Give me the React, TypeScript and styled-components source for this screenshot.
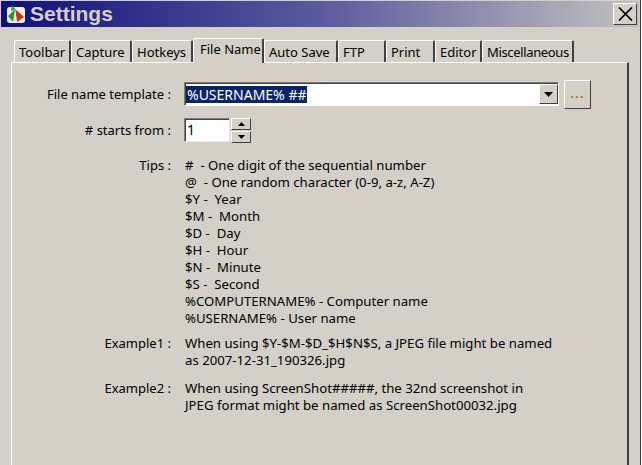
import React from 'react';
import styled, {createGlobalStyle} from 'styled-components';

const GlobalStyle = createGlobalStyle`
  html, body {
    margin: 0;
    padding: 0;
    background: #d4d0c8;
  }
`

const tabs = [
    {label: 'Toolbar', width: 57},
    {label: 'Capture', width: 61},
    {label: 'Hotkeys', width: 61},
    {label: 'File Name', width: 71, active: true},
    {label: 'Auto Save', width: 74},
    {label: 'FTP', width: 48},
    {label: 'Print', width: 49},
    {label: 'Editor', width: 47},
    {label: 'Miscellaneous', width: 92, tight: true},
];

const tips = [
    '#  - One digit of the sequential number',
    '@  - One random character (0-9, a-z, A-Z)',
    '$Y -  Year',
    '$M -  Month',
    '$D -  Day',
    '$H -  Hour',
    '$N -  Minute',
    '$S -  Second',
    '%COMPUTERNAME% - Computer name',
    '%USERNAME% - User name',
];

const App: React.FC = () => {
    return (
        <Window>
            <GlobalStyle/>
            <TitleBar>
                <svg width="20" height="20" viewBox="0 0 20 20">
                    <rect x="1" y="3" width="18" height="16" rx="3" fill="#f6f2f0"/>
                    <path d="M9 5 L18 13 L11 18 Z" fill="#e0281c"/>
                    <path d="M9 5 L11 18 L7 18 Z" fill="#f4e8c8"/>
                    <path d="M9 5 L7 18 L2 12 Z" fill="#1f9a2e"/>
                    <path d="M9 5 L6 1 L5 7 Z" fill="#1f9a2e"/>
                </svg>
                <Title>Settings</Title>
                <CloseButton>
                    <svg width="15" height="14" viewBox="0 0 15 14">
                        <path d="M1 0.5 L14 13.5 M14 0.5 L1 13.5" stroke="#000" strokeWidth="1.7"/>
                    </svg>
                </CloseButton>
            </TitleBar>
            <TabRow>
                {tabs.map(tab => (
                    <Tab key={tab.label} $width={tab.width} $active={tab.active} $tight={tab.tight}>{tab.label}</Tab>
                ))}
            </TabRow>
            <Panel>
                <FormGrid>
                    <Label>File name template :</Label>
                    <TemplateRow>
                        <Combo>
                            <Selected>%USERNAME% ##</Selected>
                            <ComboArrow>
                                <svg width="9" height="5" viewBox="0 0 9 5">
                                    <path d="M0 0 H9 L4.5 5 Z" fill="#000"/>
                                </svg>
                            </ComboArrow>
                        </Combo>
                        <BrowseButton>...</BrowseButton>
                    </TemplateRow>

                    <Label $top={9}>{'# starts from :'}</Label>
                    <SpinRow>
                        <SpinInput>1</SpinInput>
                        <SpinButtons>
                            <SpinButton>
                                <svg width="7" height="4" viewBox="0 0 7 4"><path d="M3.5 0 L7 4 H0 Z" fill="#000"/></svg>
                            </SpinButton>
                            <SpinButton>
                                <svg width="7" height="4" viewBox="0 0 7 4"><path d="M0 0 H7 L3.5 4 Z" fill="#000"/></svg>
                            </SpinButton>
                        </SpinButtons>
                    </SpinRow>

                    <TextLabel $top={14}>Tips :</TextLabel>
                    <TextBlock $top={14}>
                        {tips.map(tip => <div key={tip}>{tip}</div>)}
                    </TextBlock>

                    <TextLabel $top={8}>Example1 :</TextLabel>
                    <TextBlock $top={8}>
                        <div>When using $Y-$M-$D_$H$N$S, a JPEG file might be named</div>
                        <div>as 2007-12-31_190326.jpg</div>
                    </TextBlock>

                    <TextLabel $top={11}>Example2 :</TextLabel>
                    <TextBlock $top={11}>
                        <div>When using ScreenShot#####, the 32nd screenshot in</div>
                        <div>JPEG format might be named as ScreenShot00032.jpg</div>
                    </TextBlock>
                </FormGrid>
            </Panel>
        </Window>
    );
}

export default App;

const Window = styled.div`
  box-sizing: border-box;
  width: 642px;
  height: 465px;
  overflow: hidden;
  padding: 1px 0 0 1px;
  border-right: 1px solid #ffffff;
  box-shadow: inset -1px 0 0 #404040;
  background: #d4d0c8;
  font-family: "Noto Sans", "Liberation Sans", sans-serif;
  font-size: 13px;
  color: #000;
`

const TitleBar = styled.div`
  box-sizing: border-box;
  display: flex;
  align-items: center;
  gap: 4px;
  width: 638px;
  height: 26px;
  padding: 0 2px 0 5px;
  background: linear-gradient(to right, #10107c 0%, #5a5a9e 50%, #bcbcbc 97%, #c0c0c0 100%);
`

const Title = styled.div`
  flex: 1;
  font-family: "Liberation Sans", sans-serif;
  font-size: 21px;
  font-weight: 700;
  color: #d4d0c8;
`

const CloseButton = styled.div`
  box-sizing: border-box;
  display: flex;
  align-items: center;
  justify-content: center;
  width: 24px;
  height: 22px;
  background: #d4d0c8;
  border: 1px solid;
  border-color: #ffffff #404040 #404040 #ffffff;
`

const TabRow = styled.div`
  display: flex;
  align-items: flex-end;
  height: 35px;
  padding-left: 13px;
`

const Tab = styled.div<{ $width: number; $active?: boolean; $tight?: boolean }>`
  box-sizing: border-box;
  flex: none;
  position: relative;
  width: ${p => p.$width}px;
  height: ${p => (p.$active ? 25 : 22)}px;
  padding: ${p => (p.$active ? '2px 0 0 6px' : '3px 0 0 4px')};
  line-height: 17px;
  letter-spacing: ${p => (p.$tight ? '-0.35px' : 'normal')};
  white-space: nowrap;
  background: #d4d0c8;
  border-top: 1px solid #ffffff;
  border-left: 1px solid #ffffff;
  border-right: 2px solid #404040;
  border-top-left-radius: 2px;
  border-top-right-radius: 2px;
  margin-bottom: ${p => (p.$active ? '-1px' : '0')};
  z-index: ${p => (p.$active ? 1 : 0)};
`

const Panel = styled.div`
  box-sizing: border-box;
  width: 618px;
  height: 410px;
  margin-left: 10px;
  padding: 19px 0 0 0;
  border-top: 1px solid #ffffff;
  border-left: 1px solid #ffffff;
  border-right: 2px solid #404040;
`

const FormGrid = styled.div`
  display: grid;
  grid-template-columns: 159px 1fr;
  column-gap: 14px;
`

const Label = styled.div<{ $top?: number }>`
  display: flex;
  align-items: center;
  justify-content: flex-end;
  height: 24px;
  margin-top: ${p => p.$top ?? 0}px;
  white-space: pre;
`

const TextLabel = styled.div<{ $top: number }>`
  margin-top: ${p => p.$top}px;
  text-align: right;
  line-height: 17px;
  white-space: pre;
`

const TextBlock = styled.div<{ $top: number }>`
  margin-top: ${p => p.$top}px;
  font-size: 13.2px;
  line-height: 17px;
  white-space: pre;
`

const TemplateRow = styled.div`
  display: flex;
  align-items: flex-start;
  gap: 5px;
  margin-left: -1px;
`

const Combo = styled.div`
  box-sizing: border-box;
  display: flex;
  align-items: center;
  width: 375px;
  height: 24px;
  padding: 0 0 0 1px;
  background: #fff;
  border: 1px solid;
  border-color: #808080 #ffffff #ffffff #808080;
  box-shadow: inset 1px 1px 0 #404040;
`

const Selected = styled.div`
  flex: none;
  height: 17px;
  line-height: 17px;
  padding: 0 1px;
  font-size: 14px;
  background: #0a246a;
  color: #fff;
`

const ComboArrow = styled.div`
  box-sizing: border-box;
  display: flex;
  align-items: center;
  justify-content: center;
  width: 19px;
  height: 20px;
  margin-left: auto;
  background: #d4d0c8;
  border: 1px solid;
  border-color: #ffffff #404040 #404040 #ffffff;
`

const BrowseButton = styled.div`
  box-sizing: border-box;
  width: 27px;
  height: 29px;
  margin-top: -2px;
  text-align: center;
  line-height: 24px;
  font-size: 14px;
  letter-spacing: 1px;
  color: #a06000;
  background: #d4d0c8;
  border: 1px solid;
  border-color: #ffffff #404040 #404040 #ffffff;
`

const SpinRow = styled.div`
  display: flex;
  align-items: flex-start;
  gap: 1px;
  margin: 9px 0 0 -1px;
`

const SpinInput = styled.div`
  box-sizing: border-box;
  width: 46px;
  height: 24px;
  padding-left: 2px;
  line-height: 21px;
  font-size: 14px;
  background: #fff;
  border: 1px solid;
  border-color: #808080 #e8e8e8 #e8e8e8 #808080;
  box-shadow: inset 1px 1px 0 #404040;
`

const SpinButtons = styled.div`
  display: flex;
  flex-direction: column;
  gap: 1px;
`

const SpinButton = styled.div`
  box-sizing: border-box;
  display: flex;
  align-items: center;
  justify-content: center;
  width: 20px;
  height: 12px;
  background: #d4d0c8;
  border: 1px solid;
  border-color: #ffffff #404040 #404040 #ffffff;
`
